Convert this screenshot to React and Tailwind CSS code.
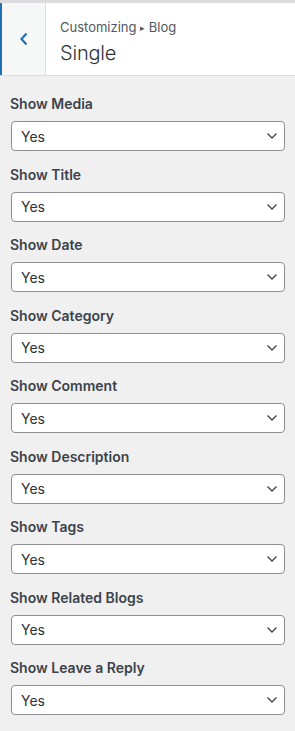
const items = [
  "Show Media",
  "Show Title",
  "Show Date",
  "Show Category",
  "Show Comment",
  "Show Description",
  "Show Tags",
  "Show Related Blogs",
  "Show Leave a Reply",
];

function Chevron() {
  return (
    <svg width="12" height="8" viewBox="0 0 12 8" className="shrink-0">
      <polyline points="1.5,1.5 6,6 10.5,1.5" fill="none" stroke="#3c434a" strokeWidth="1.3" />
    </svg>
  );
}

export default function App() {
  return (
    <div
      className="w-[295px] h-[731px] bg-[#f0f0f1] overflow-hidden"
      style={{ fontFamily: 'Inter, "Noto Sans", sans-serif' }}
    >
      <div className="border-t-[3px] border-[#dcdcde] bg-white border-b border-b-[#dcdcde] flex h-[76px]">
        <div className="w-[46px] shrink-0 bg-[#f6f7f7] border-l-2 border-l-[#2271b1] border-r border-r-[#dcdcde] flex items-center justify-center">
          <svg width="10" height="14" viewBox="0 0 10 14">
            <polyline points="7.5,1.5 2.5,7 7.5,12.5" fill="none" stroke="#2271b1" strokeWidth="2.2" />
          </svg>
        </div>
        <div className="flex flex-col pl-[14px] pt-[14px]">
          <div className="text-[13px] leading-[20px] text-[#50575e]">
            Customizing <span className="text-[9px] align-[1px]">▸</span> Blog
          </div>
          <div className="text-[20px] leading-[28px] text-[#2c3338] font-light mt-[1px] tracking-[-0.2px]">Single</div>
        </div>
      </div>
      <div className="flex flex-col gap-[13.5px] pt-[18px] px-[10px]">
        {items.map((label) => (
          <div key={label} className="flex flex-col">
            <div className="text-[14px] leading-[20px] font-semibold text-[#3c434a]">{label}</div>
            <div className="mt-[7px] h-[30px] ml-[1px] bg-white border border-[#8c8f94] rounded-[4px] flex items-center justify-between pl-[9px] pr-[6px]">
              <span className="text-[14px] text-[#2c3338]">Yes</span>
              <Chevron />
            </div>
          </div>
        ))}
      </div>
    </div>
  );
}
